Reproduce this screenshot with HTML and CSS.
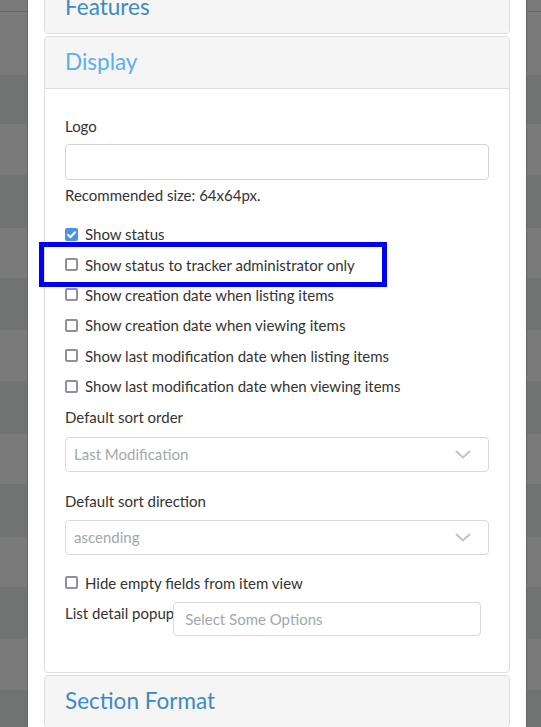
FILE: index.html
```html
<!DOCTYPE html>
<html lang="en">
<head>
<meta charset="utf-8">
<title>Tracker properties</title>
<link rel="stylesheet" href="styles.css">
</head>
<body>
<div class="modal">
  <div class="modal-inner">
    <div class="panel">
      <div class="panel-heading"><h4 class="panel-title">Features</h4></div>
    </div>
    <div class="panel">
      <div class="panel-heading open"><h4 class="panel-title active">Display</h4></div>
      <div class="panel-body">
        <label class="field-label">Logo</label>
        <div class="text-input"></div>
        <p class="help">Recommended size: 64x64px.</p>
        <div class="checks">
          <div class="check-row"><span class="cb checked"><svg viewBox="0 0 13 13" width="13" height="13"><path d="M3 6.8 L5.4 9.2 L10 4.2" fill="none" stroke="#fff" stroke-width="2" stroke-linecap="round" stroke-linejoin="round"/></svg></span>Show status</div>
          <div class="check-row"><span class="cb"></span>Show status to tracker administrator only</div>
          <div class="check-row"><span class="cb"></span>Show creation date when listing items</div>
          <div class="check-row"><span class="cb"></span>Show creation date when viewing items</div>
          <div class="check-row"><span class="cb"></span>Show last modification date when listing items</div>
          <div class="check-row"><span class="cb"></span>Show last modification date when viewing items</div>
        </div>
        <label class="field-label sort-label">Default sort order</label>
        <div class="select first-select"><span>Last Modification</span><svg class="chev" viewBox="0 0 16 9" width="16" height="9"><path d="M1 1 L8 7.5 L15 1" fill="none" stroke="#bfc3c6" stroke-width="2"/></svg></div>
        <label class="field-label dir-label">Default sort direction</label>
        <div class="select second-select"><span>ascending</span><svg class="chev" viewBox="0 0 16 9" width="16" height="9"><path d="M1 1 L8 7.5 L15 1" fill="none" stroke="#bfc3c6" stroke-width="2"/></svg></div>
        <div class="check-row hide-row"><span class="cb"></span>Hide empty fields from item view</div>
        <div class="popup-row">
          <label class="popup-label">List detail popup</label>
          <div class="multi">Select Some Options</div>
        </div>
      </div>
    </div>
    <div class="panel last">
      <div class="panel-heading"><h4 class="panel-title">Section Format</h4></div>
    </div>
  </div>
</div>
<div class="highlight"></div>
</body>
</html>
```

FILE: styles.css
```css
html, body {
  margin: 0;
  padding: 0;
  height: 727px;
  overflow: hidden;
}

body {
  font-family: Lato, "Open Sans", sans-serif;
  font-size: 15px;
  color: #333;
  background: linear-gradient(to bottom,
    #7a7a7a 0, #7a7a7a 11px,
    #686868 11px, #686868 12px,
    #7a7a7a 12px, #7a7a7a 75px,
    #717372 75px, #717372 124px,
    #7a7a7a 124px, #7a7a7a 175px,
    #717372 175px, #717372 228px,
    #7a7a7a 228px, #7a7a7a 278px,
    #717372 278px, #717372 330px,
    #7a7a7a 330px, #7a7a7a 381px,
    #717372 381px, #717372 434px,
    #7a7a7a 434px, #7a7a7a 484px,
    #717372 484px, #717372 537px,
    #7a7a7a 537px, #7a7a7a 587px,
    #717372 587px, #717372 639px,
    #7a7a7a 639px, #7a7a7a 690px,
    #717372 690px, #717372 727px);
}

.modal {
  margin-left: 28px;
  width: 498px;
  height: 727px;
  background: #fff;
  overflow: hidden;
  box-shadow: -1px 0 0 #666, 1px 0 0 #666;
}

.modal-inner {
  margin-top: -19px;
  padding: 0 16px;
}

.panel {
  border: 1px solid #ddd;
  border-radius: 4px;
  background: #fff;
  margin-bottom: 2px;
  overflow: hidden;
}

.panel-heading {
  background: #f5f5f5;
  padding: 11px 20px 13px;
}

.panel-heading.open {
  border-bottom: 1px solid #ddd;
}

.panel-title {
  margin: 0;
  font-weight: 400;
  font-size: 22.5px;
  line-height: 27px;
  color: #3c8ac4;
}

.panel-title.active {
  color: #5aaff0;
}

.panel-body {
  padding: 27px 20px 36px;
}

.field-label {
  display: block;
  line-height: 20px;
}

.text-input {
  margin-top: 8px;
  height: 36px;
  box-sizing: border-box;
  border: 1px solid #cfd4da;
  border-radius: 4px;
}

.help {
  margin: 5px 0 0;
  line-height: 20px;
}

.checks {
  margin-top: 14px;
}

.check-row {
  display: flex;
  align-items: center;
  height: 30.4px;
  line-height: 20px;
}

.cb {
  width: 13px;
  height: 13px;
  box-sizing: border-box;
  border: 2px solid #8f8f9d;
  border-radius: 2px;
  margin-right: 7px;
  flex: none;
  display: flex;
}

.cb.checked {
  border: none;
  background: #4a94e6;
}

.sort-label {
  margin-top: 5.6px;
}

.select {
  display: flex;
  align-items: center;
  justify-content: space-between;
  height: 35px;
  box-sizing: border-box;
  border: 1px solid #d6dadd;
  border-radius: 4px;
  padding: 0 17px 0 8px;
  color: #a2a8aa;
}

.first-select {
  margin-top: 9.7px;
}

.dir-label {
  margin-top: 19.3px;
}

.second-select {
  margin-top: 8.7px;
}

.hide-row {
  margin-top: 12.8px;
}

.popup-row {
  display: flex;
  align-items: flex-start;
  margin-top: 4.6px;
}

.popup-label {
  line-height: 20px;
  margin-top: 1px;
}

.multi {
  margin-left: -1px;
  width: 308px;
  height: 34px;
  box-sizing: border-box;
  border: 1px solid #d6dadd;
  border-radius: 4px;
  padding: 0 11px;
  line-height: 32px;
  color: #a2a8aa;
}

.highlight {
  position: absolute;
  left: 39px;
  top: 242px;
  width: 348px;
  height: 45px;
  box-sizing: border-box;
  border: 5px solid #0000f5;
}
```
